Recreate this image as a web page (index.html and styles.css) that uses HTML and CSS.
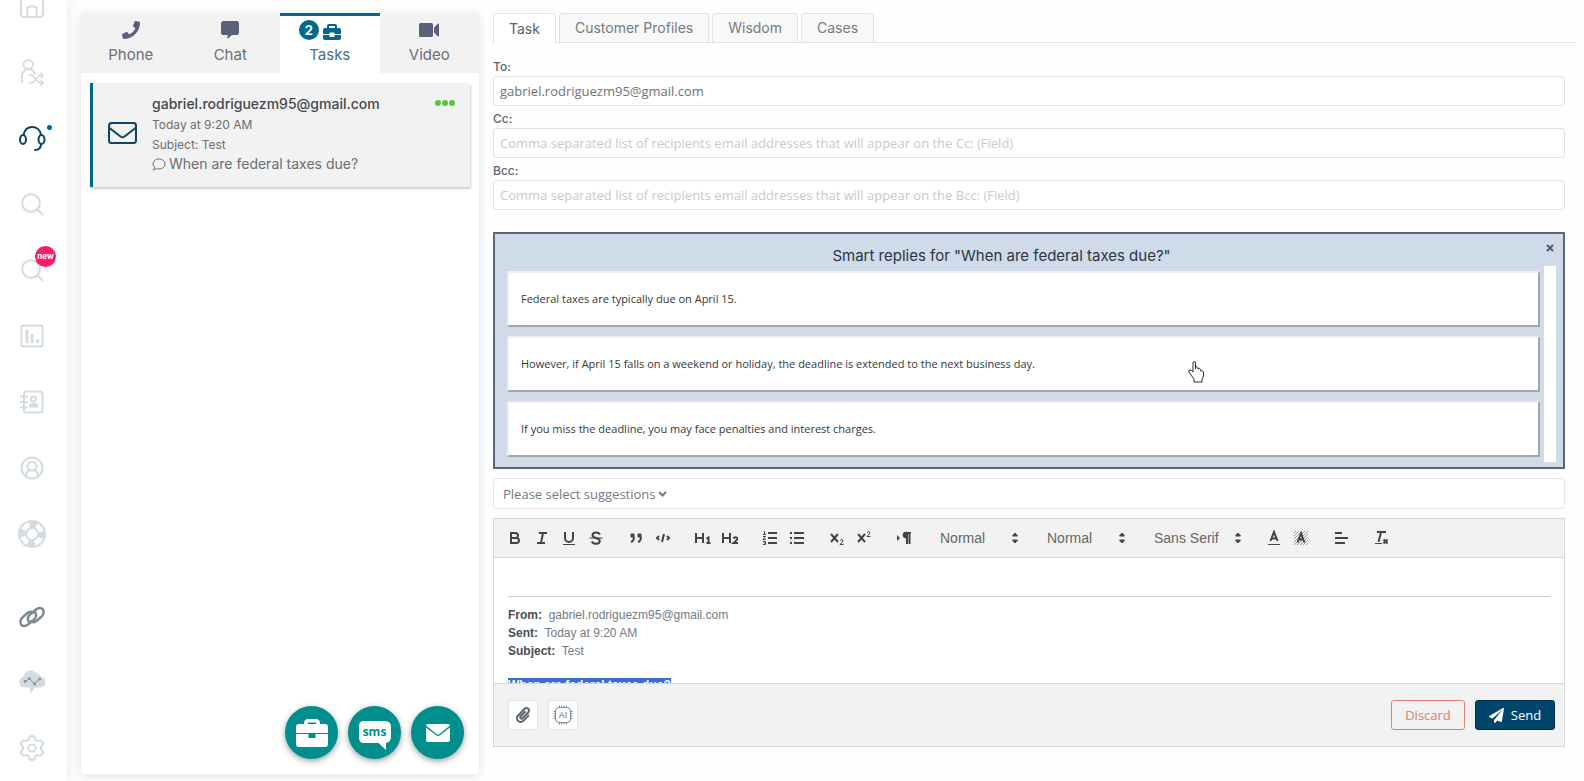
FILE: index.html
```html
<!DOCTYPE html>
<html lang="en">
<head>
<meta charset="utf-8">
<title>Agent workspace</title>
<link rel="stylesheet" href="styles.css">
</head>
<body>
<div class="app">
  <nav class="rail" aria-label="Main">
    <a class="rail-link" href="#home" aria-label="Home"><svg class="ico" viewBox="0 0 24 24"><path d="M1 3V20q0 3 3 3H20q3 0 3-3V3M7.500 22.500V15q0-2.500 2.500-2.500h4q2.500 0 2.500 2.500v7.500"/></svg></a>
    <a class="rail-link" href="#transfer" aria-label="Transfer"><svg class="ico ico-lg" viewBox="0 0 28 30"><circle cx="10" cy="7" r="5"/><path d="M3 26v-5c0-5 3-9 7-9s6.500 2 7 5"/><path class="thin" d="M11 18.500h3.500l7 8H26M11 26.500h3.500l7-8H26M23.500 16l2.500 2.500-2.500 2.500M23.500 24l2.500 2.500-2.500 2.500"/></svg></a>
    <a class="rail-link rail-current" href="#agent" aria-label="Agent" aria-current="page"><svg class="ico ico-lg" viewBox="0 0 28 28"><ellipse cx="5" cy="15.500" rx="3" ry="4.500"/><ellipse cx="23.500" cy="15.500" rx="3" ry="4.500"/><path d="M5.500 11C6.500 6 10 3 14.200 3s8 3 8.900 8M23 20c0 4-2.500 6-6 6"/></svg><span class="rail-dot"></span></a>
    <a class="rail-link" href="#search" aria-label="Search"><svg class="ico" viewBox="0 0 24 24"><circle cx="11" cy="11" r="8.800"/><path d="M17.500 17.500l5 5"/></svg></a>
    <a class="rail-link" href="#search-new" aria-label="New search"><svg class="ico" viewBox="0 0 24 24"><circle cx="11" cy="11" r="8.800"/><path d="M17.500 17.500l5 5"/></svg><span class="rail-new">new</span></a>
    <a class="rail-link" href="#reports" aria-label="Reports"><svg class="ico" viewBox="0 0 24 24"><rect x="1.500" y="1.500" width="21" height="21" rx="2"/><path class="thick" d="M7 7v11M12 11v7M17.500 16.500v1.500"/></svg></a>
    <a class="rail-link" href="#contacts" aria-label="Contacts"><svg class="ico" viewBox="0 0 24 24"><rect x="4" y="1.500" width="18.500" height="21" rx="2.500"/><path d="M1 6.500h6M1 12h6M1 17.500h6"/><circle cx="13.500" cy="9" r="2.500"/><path class="solid" d="M9 17.500v-2q0-2.500 2.500-2.500h4q2.500 0 2.500 2.500v2z"/></svg></a>
    <a class="rail-link" href="#profile" aria-label="Profile"><svg class="ico" viewBox="0 0 24 24"><circle cx="12" cy="12" r="10.500"/><circle cx="12" cy="10" r="4.500"/><path d="M6 20c0-3 2-5.500 4-6M18 20c0-3-2-5.500-4-6"/></svg></a>
    <a class="rail-link" href="#help" aria-label="Help"><svg class="ico ico-lg" viewBox="0 0 28 28"><circle cx="14" cy="14" r="13"/><circle class="ring" cx="14" cy="14" r="9.500"/><circle cx="14" cy="14" r="6"/></svg></a>
    <a class="rail-link rail-lower rail-dark" href="#links" aria-label="Links"><svg class="ico ico-lg" viewBox="0 0 28 24"><path class="chain" d="M11 17c-2-3-1-6 1.500-8L18 4.500c4-3 7-1 7.500 1.500.5 3-.5 4.500-3 6.500l-4 3.500c-2 1.500-4 1.500-5.500 0M17 7c2 3 1 6-1.500 8L10 19.500c-4 3-7 1-7.500-1.500-.5-3 .5-4.500 3-6.500L9.500 8c2-1.500 4-1.500 5.500 0"/></svg></a>
    <a class="rail-link" href="#insights" aria-label="Insights"><svg class="ico ico-lg" viewBox="0 0 28 26"><path class="cloud" d="M6 19.500a5.500 5.500 0 0 1-.5-10.800A7.500 7.500 0 0 1 18.500 5a5 5 0 0 1 4 3.500 5.600 5.600 0 0 1 .5 11h-6L12 26v-6.500z"/><g class="trend"><path d="M7 13.500l4.500-3 5 5.500 4.500-5"/><circle cx="7" cy="13.500" r="1"/><circle cx="11.500" cy="10.500" r="1"/><circle cx="16.500" cy="16" r="1"/><circle cx="21.500" cy="11" r="1"/></g></svg></a>
    <a class="rail-link" href="#settings" aria-label="Settings"><svg class="ico ico-lg" viewBox="0 0 28 28"><path d="M11 4.500Q11.500 2 14 2t3 2.500c.4 2 2 2.900 4 2.200q2.400-.7 3.600 1.300t-.6 3.600c-1.600 1.600-1.600 3.200 0 4.800q1.800 1.600.6 3.600t-3.600 1.300c-2-.7-3.600.2-4 2.200Q16.500 26 14 26t-3-2.500c-.4-2-2-2.900-4-2.200q-2.400.7-3.600-1.300T4 16.400c1.600-1.600 1.600-3.200 0-4.800q-1.800-1.600-.6-3.600T7 6.700c2 .7 3.600-.2 4-2.200z"/><circle cx="14" cy="14" r="3.600"/></svg></a>
  </nav>

  <section class="panel" aria-label="Interactions">
    <div class="channels" role="tablist">
      <button class="channel" type="button" role="tab"><span class="channel-icons"><svg width="18" height="18" viewBox="0 0 512 512"><path d="M493.400 24.600l-104-24c-11.300-2.600-22.900 3.300-27.500 13.900l-48 112c-4.200 9.800-1.400 21.300 6.900 28l60.600 49.600c-36 76.700-98.900 140.500-177.200 177.200l-49.600-60.600c-6.800-8.300-18.200-11.100-28-6.900l-112 48C3.900 366.500-2 378.100.6 389.400l24 104C27.100 504.200 36.700 512 48 512c256.100 0 464-207.500 464-464 0-11.200-7.700-20.900-18.600-23.400z"/></svg></span>Phone</button>
      <button class="channel" type="button" role="tab"><span class="channel-icons"><svg width="20" height="18" viewBox="0 0 20 18"><path d="M3 0h13.500Q19 0 19 2.500v9q0 2.500-2.500 2.500H12l-4.500 4v-4H3Q1 14 1 12V2.500Q1 0 3 0z"/></svg></span>Chat</button>
      <button class="channel channel-on" type="button" role="tab" aria-selected="true"><span class="channel-icons"><span class="count">2</span><svg class="kit" width="18" height="16" viewBox="0 0 18 16"><path d="M4 4V2q0-2 2-2h6q2 0 2 2v2h2q2 0 2 2v4h-6.500V8.500h-5V10H0V6q0-2 2-2zM6 4h6V2H6zM0 11h6.500v2h5v-2H18v3q0 2-2 2H2q-2 0-2-2z"/></svg></span>Tasks</button>
      <button class="channel" type="button" role="tab"><span class="channel-icons"><svg width="20" height="14" viewBox="0 0 20 14"><path d="M1.500 0h11Q14 0 14 1.500v11q0 1.500-1.500 1.500h-11Q0 14 0 12.500v-11Q0 0 1.500 0zM15 4.500L18.500 1Q20 0 20 1.500v11q0 1.500-1.500.5L15 9.500z"/></svg></span>Video</button>
    </div>
    <article class="task">
      <svg class="task-mail" width="30" height="24" viewBox="0 0 30 24"><rect x="1" y="2" width="27" height="20" rx="2.500"/><path d="M1.500 7l11 8.500q2 1.500 4 0L27.500 7"/></svg>
      <div class="task-text">
        <h2 class="task-from">gabriel.rodriguezm95@gmail.com</h2>
        <p class="task-meta">Today at 9:20 AM</p>
        <p class="task-meta">Subject: Test</p>
        <p class="task-last"><svg width="14" height="13" viewBox="0 0 14 13"><path d="M2.500 9A4.500 4.500 0 0 1 1 6c0-3 2.700-5 6-5s6 2 6 5-2.700 5-6 5q-1.500 0-2.700-.6Q3 12 1 12q1.500-1.500 1.500-3z"/></svg>When are federal taxes due?</p>
      </div>
      <button class="more" type="button" aria-label="More"><span></span><span></span><span></span></button>
    </article>
    <div class="fabs">
      <button class="fab" type="button" aria-label="New task"><svg width="32" height="28" viewBox="0 0 32 28"><path d="M8 5V4q0-3 3-4h10q3 1 3 4v1h5q3 0 3 3v6H0V8q0-3 3-3zM12 5h8V3.500h-8zM0 15h12.500v4h7v-4H32v10q0 3-3 3H3q-3 0-3-3z"/></svg></button>
      <button class="fab fab-sms" type="button"><svg width="34" height="30" viewBox="0 0 34 30"><path d="M6 0h21q6 0 6 6v10q0 5-5 6v7l-7.500-7H6q-5 0-5-5V5q0-5 5-5z"/></svg><span>sms</span></button>
      <button class="fab" type="button" aria-label="New email"><svg width="24" height="18" viewBox="0 0 24 18"><path d="M2 0h20q2 0 2 1.500L13.500 10q-1.500 1-3 0L0 1.500Q0 0 2 0zM0 3.500L10 11.200q2 1.400 4 0L24 3.500V16q0 2-2 2H2q-2 0-2-2z"/></svg></button>
    </div>
  </section>

  <main class="work">
    <div class="tabs" role="tablist">
      <button class="tab tab-on" type="button" role="tab" aria-selected="true">Task</button>
      <button class="tab" type="button" role="tab">Customer Profiles</button>
      <button class="tab" type="button" role="tab">Wisdom</button>
      <button class="tab" type="button" role="tab">Cases</button>
    </div>
    <form class="compose">
      <div class="field"><label for="to">To:</label><input id="to" type="text" value="gabriel.rodriguezm95@gmail.com"></div>
      <div class="field"><label for="cc">Cc:</label><input id="cc" type="text" placeholder="Comma separated list of recipients email addresses that will appear on the Cc: (Field)"></div>
      <div class="field"><label for="bcc">Bcc:</label><input id="bcc" type="text" placeholder="Comma separated list of recipients email addresses that will appear on the Bcc: (Field)"></div>

      <section class="smart">
        <h3 class="smart-title">Smart replies for "When are federal taxes due?"</h3>
        <button class="smart-close" type="button" aria-label="Close"><svg width="8" height="8" viewBox="0 0 8 8"><path d="M1 1l6 6M7 1L1 7"/></svg></button>
        <div class="smart-body">
          <div class="smart-list">
            <button class="reply" type="button">Federal taxes are typically due on April 15.</button>
            <button class="reply" type="button">However, if April 15 falls on a weekend or holiday, the deadline is extended to the next business day.<svg class="pointer" width="17" height="22" viewBox="0 0 17 22"><path d="M6 21v-3l-4.500-6q-1.500-2.500 0-3T5 11V2q0-1.500 1.300-1.500T7.500 2v6-2q2-1 2.500.5V8q2-1.500 2.700.5V10q2-1 2.800 1v4L14 18v3z"/></svg></button>
            <button class="reply" type="button">If you miss the deadline, you may face penalties and interest charges.</button>
          </div>
          <div class="smart-track"></div>
        </div>
      </section>

      <button class="suggest" type="button">Please select suggestions<svg width="9" height="6" viewBox="0 0 9 6"><path d="M1 1l3.500 3.500L8 1"/></svg></button>

      <div class="editor">
        <div class="toolbar" role="toolbar" aria-label="Formatting">
          <div class="group">
            <button class="tool" type="button" aria-label="Bold"><svg viewBox="0 0 18 18"><path d="M5 4h4.500a2.500 2.500 0 0 1 0 5H5zM5 9h5.500a2.500 2.500 0 0 1 0 5H5z"/></svg></button>
            <button class="tool" type="button" aria-label="Italic"><svg viewBox="0 0 18 18"><path d="M6 4h8M4 14h8M8 14l2-10"/></svg></button>
            <button class="tool" type="button" aria-label="Underline"><svg viewBox="0 0 18 18"><path d="M5 3v6a4 4 0 0 0 8 0V3"/><path class="hair" d="M3 15.500h12"/></svg></button>
            <button class="tool" type="button" aria-label="Strike"><svg viewBox="0 0 18 18"><path class="hair" d="M2.500 9h13"/><path d="M13 5.500C12 4 10.500 3.500 9 3.500c-2.500 0-3.500 1.200-3.500 2.500C5.500 8 7 8.500 9 9s3.800 1 3.800 3-1.500 2.800-3.800 2.800c-2 0-3.500-.8-4.300-2.300"/></svg></button>
          </div>
          <div class="group">
            <button class="tool" type="button" aria-label="Quote"><svg viewBox="0 0 18 18"><path class="fill" d="M4 5h3v3H4zM11 5h3v3h-3z"/><path d="M7 8c0 4.031-3 5-3 5M14 8c0 4.031-3 5-3 5"/></svg></button>
            <button class="tool" type="button" aria-label="Code"><svg viewBox="0 0 18 18"><path d="M5 7L3 9l2 2M13 7l2 2-2 2M10 5L8 13"/></svg></button>
          </div>
          <div class="group">
            <button class="tool" type="button" aria-label="Heading 1"><svg viewBox="0 0 18 18"><path d="M2 4v10M9 4v10M2 9h7M12.500 9.500l2-1V14M12.500 14h4"/></svg></button>
            <button class="tool" type="button" aria-label="Heading 2"><svg viewBox="0 0 18 18"><path d="M2 4v10M9 4v10M2 9h7M12.500 9.500q.5-1.200 2-1.200 2 0 1.700 1.700-.2 1-3.700 4H17"/></svg></button>
          </div>
          <div class="group">
            <button class="tool" type="button" aria-label="Numbered list"><svg viewBox="0 0 18 18"><path d="M7 4h9M7 9h9M7 14h9"/><path class="hair" d="M2.500 2.500h1v3M2 5.500h3M2 7.500h2.500L2 10.500h3M2 12.500h2.500v3H2M3 14h1.500"/></svg></button>
            <button class="tool" type="button" aria-label="Bullet list"><svg viewBox="0 0 18 18"><path d="M6 4h10M6 9h10M6 14h10M2 4h2M2 9h2M2 14h2"/></svg></button>
          </div>
          <div class="group">
            <button class="tool" type="button" aria-label="Subscript"><svg viewBox="0 0 18 18"><path d="M3 5l7 8M10 5l-7 8"/><path class="hair" d="M12 11.500q2-2 3 0 0 1-3 4h3.500"/></svg></button>
            <button class="tool" type="button" aria-label="Superscript"><svg viewBox="0 0 18 18"><path d="M3 5l7 8M10 5l-7 8"/><path class="hair" d="M12 3.500q2-2 3 0 0 1-3 4h3.500"/></svg></button>
          </div>
          <div class="group">
            <button class="tool" type="button" aria-label="Text direction"><svg viewBox="0 0 18 18"><path class="solid" d="M2 12V6l3 3z"/><path class="fill" d="M11.500 9H11a3 3 0 0 1 0-6h.5z"/><path d="M11 4h5M12 4v11M14.500 4v11"/></svg></button>
          </div>
          <div class="pick"><select aria-label="Size"><option>Normal</option></select><svg viewBox="0 0 18 18"><path d="M6.500 7L9 4l2.500 3zM6.500 11L9 14l2.500-3z"/></svg></div>
          <div class="pick"><select aria-label="Heading"><option>Normal</option></select><svg viewBox="0 0 18 18"><path d="M6.500 7L9 4l2.500 3zM6.500 11L9 14l2.500-3z"/></svg></div>
          <div class="pick pick-wide"><select aria-label="Font"><option>Sans Serif</option></select><svg viewBox="0 0 18 18"><path d="M6.500 7L9 4l2.500 3zM6.500 11L9 14l2.500-3z"/></svg></div>
          <div class="group">
            <button class="tool" type="button" aria-label="Text colour"><svg viewBox="0 0 18 18"><path class="hair" d="M3 15.500h12"/><path d="M5.500 12L9 3l3.500 9M6.500 9.500h5"/></svg></button>
            <button class="tool" type="button" aria-label="Highlight"><svg viewBox="0 0 18 18"><path class="hatch" d="M2 4l2-2M2 7l5-5M2 10l8-8M2 13L13 2M2 16L16 2M5 16L16 5M8 16l8-8M11 16l5-5M14 16l2-2"/><path d="M5.500 13.500L9 4.500l3.500 9M6.500 10.500h5"/></svg></button>
          </div>
          <div class="group">
            <button class="tool" type="button" aria-label="Align"><svg viewBox="0 0 18 18"><path d="M3 9h13M3 14h10M3 4h7"/></svg></button>
          </div>
          <div class="group">
            <button class="tool" type="button" aria-label="Clear formatting"><svg viewBox="0 0 18 18"><path d="M5 3h9M6.500 13L9 3.500M11.500 10.500l4 4M15.500 10.500l-4 4"/><path class="hair" d="M3 14.500h7"/></svg></button>
          </div>
        </div>
        <div class="letter" contenteditable="true" role="textbox" aria-label="Message">
          <hr>
          <p><b>From:</b>&nbsp; gabriel.rodriguezm95@gmail.com</p>
          <p><b>Sent:</b>&nbsp; Today at 9:20 AM</p>
          <p><b>Subject:</b>&nbsp; Test</p>
          <p class="quoted"><b class="marked">When are federal taxes due?</b></p>
        </div>
        <div class="actions">
          <button class="square" type="button" aria-label="Attach"><svg width="14" height="16" viewBox="0 0 448 512"><path class="clip" d="M43.246 466.142c-58.430-60.289-57.341-157.511 1.386-217.581L254.392 34c44.316-45.332 116.351-45.336 160.671 0 43.890 44.894 43.943 117.329 0 162.276L232.214 383.128c-29.855 30.537-78.633 30.111-107.982-.998-28.275-29.970-27.368-77.473 1.452-106.953l143.743-146.835c6.182-6.314 16.312-6.422 22.626-.241l22.861 22.379c6.315 6.182 6.422 16.312.241 22.626L171.427 319.927c-4.932 5.045-5.236 13.428-.648 18.292 4.372 4.634 11.245 4.711 15.688.165l182.849-186.851c19.613-20.062 19.613-52.725-.011-72.798-19.189-19.627-49.957-19.637-69.154 0L90.390 293.295c-34.763 35.560-35.299 93.120-1.191 128.313 34.010 35.093 88.985 35.137 123.058.286l172.060-175.999c6.177-6.319 16.307-6.433 22.626-.256l22.877 22.364c6.319 6.177 6.434 16.307.256 22.626l-172.060 175.998c-59.576 60.938-155.943 60.216-214.770-.485z"/></svg></button>
          <button class="square" type="button" aria-label="AI assist"><svg width="20" height="20" viewBox="0 0 20 20"><path class="chip" d="M6 2.500h8q3.500 0 3.500 3.500v8q0 3.500-3.500 3.500H6Q2.500 17.500 2.500 14V6Q2.500 2.500 6 2.500zM6.500.5v2M8.800.5v2M11.200.5v2M13.500.5v2M6.500 17.500v2M8.800 17.500v2M11.200 17.500v2M13.500 17.500v2M.5 6.500h2M.5 8.800h2M.5 11.200h2M.5 13.500h2M17.500 6.500h2M17.500 8.800h2M17.500 11.200h2M17.500 13.500h2"/><text class="chip-text" x="10" y="13" text-anchor="middle">AI</text></svg></button>
          <button class="discard" type="button">Discard</button>
          <button class="send" type="submit"><svg width="15" height="15" viewBox="0 0 512 512"><path d="M476 3.200L12.500 270.600c-18.100 10.400-15.800 35.600 2.200 43.200L121 358.400l287.300-253.200c5.500-4.900 13.300 2.600 8.600 8.300L176 407v80.500c0 23.600 28.500 32.900 42.500 15.800L282 426l124.600 52.200c14.200 6 30.400-2.900 33-18.200l72-432C515 7.800 493.300-6.800 476 3.200z"/></svg>Send</button>
        </div>
      </div>
    </form>
  </main>
</div>
</body>
</html>
```
FILE: styles.css
```css
* { box-sizing: border-box; }
body { margin: 0; background: #fefefe; color: #5f6770; font: 14px/20px Inter, "Open Sans", sans-serif; }
button, input, select { font: inherit; color: inherit; }
button { margin: 0; padding: 0; border: 0; background: none; cursor: pointer; }
h2, h3, p { margin: 0; font-weight: 400; }

.app { display: flex; height: 100vh; min-height: 720px; overflow: hidden; }

/* Icon rail */
.rail { flex: none; width: 67px; padding-right: 3px; background: #fff; box-shadow: 2px 0 12px #e9ecf1; display: flex; flex-direction: column; overflow: hidden; justify-content: flex-end; }
.rail-link { position: relative; flex: none; height: 66px; display: flex; align-items: center; justify-content: center; color: #d3dcdf; }
.rail-lower { margin: 17px 0 -2px; }
.rail-link:last-child { margin-top: 1px; }
.rail-current { color: #0d4460; }
.rail-dark { color: #7b8a93; }
.ico { width: 24px; height: 24px; fill: none; stroke: currentColor; stroke-width: 2; stroke-linecap: round; stroke-linejoin: round; }
.ico-lg { width: 28px; height: 28px; }
.ico .thin { stroke-width: 1.5; }
.ico .thick { stroke-width: 3; }
.ico .chain { stroke-width: 2.4; }
.ico .solid { fill: currentColor; stroke: none; }
.ico .ring { stroke-width: 6; stroke-dasharray: 7 8; stroke-dashoffset: 3; stroke-linecap: butt; }
.ico .cloud { fill: #d3dcdf; stroke: none; }
.ico .trend { stroke: #7b8a93; stroke-width: 1; }
.rail-dot { position: absolute; left: 47px; top: 20px; width: 5px; height: 5px; border-radius: 50%; background: #00678f; }
.rail-new { position: absolute; left: 35px; top: 9px; width: 21px; height: 21px; border-radius: 50%; background: #ff1a6c; color: #fff; font-size: 8px; font-weight: 700; line-height: 21px; text-align: center; }

/* Interaction list */
.panel { flex: none; position: relative; width: 398px; margin: 13px 0 7px 14px; background: #fff; border-radius: 3px; box-shadow: 0 2px 10px #dde1e8; }
.channels { display: grid; grid-template-columns: repeat(4, 1fr); }
.channel { height: 60px; padding-top: 4px; border-top: 3px solid #f2f2f2; background: #f2f2f2; color: #6b7078; font-size: 15px; line-height: 20px; display: flex; flex-direction: column; align-items: center; justify-content: flex-start; gap: 5px; }
.channel svg { fill: #5a6078; }
.channel-icons { height: 20px; display: flex; align-items: center; justify-content: center; gap: 4px; }
.channel-on { background: #fff; border-top-color: #00678f; color: #47708c; }
.channel-on svg { fill: #00678f; }
.channel-on .channel-icons { padding-right: 20px; }
.count { width: 20px; height: 20px; border-radius: 50%; background: #00678f; color: #fff; font-size: 13px; font-weight: 700; line-height: 20px; }
.kit { align-self: flex-end; }
.task { position: relative; margin: 10px 9px; padding: 10px 15px 14px; min-height: 104px; border-left: 3px solid #00678f; background: #f2f2f2; box-shadow: 1px 2px 2px #cdcfd2; display: flex; align-items: center; gap: 14px; }
.task-mail { fill: none; stroke: #0d4460; stroke-width: 2; }
.task-text { flex: 1; }
.task-from { color: #45484d; font-size: 14px; font-weight: 500; line-height: 22px; }
.task-meta { color: #6b6e73; font-size: 12px; line-height: 20px; }
.task-last { display: flex; align-items: center; gap: 3px; color: #6b6e73; font-size: 14px; line-height: 18px; }
.task-last svg { fill: none; stroke: #6b6e73; }
.more { position: absolute; right: 15px; top: 17px; display: flex; gap: 1px; }
.more span { width: 6px; height: 6px; border-radius: 50%; background: #5ac73a; }
.fabs { position: absolute; right: 15px; bottom: 15px; display: flex; gap: 10px; }
.fab { position: relative; width: 53px; height: 53px; border-radius: 50%; background: #008f8c; box-shadow: 0 2px 6px #9a9fa3; display: flex; align-items: center; justify-content: center; }
.fab svg { fill: #fff; }
.fab-sms svg { margin-top: 6px; }
.fab-sms span { position: absolute; left: 0; right: 0; top: 17px; color: #008f8c; font: 700 12px/18px "Open Sans", sans-serif; }

/* Work area */
.work { flex: 1; min-width: 0; padding: 13px 9px 34px 14px; display: flex; flex-direction: column; }
.tabs { display: flex; gap: 3px; border-bottom: 1px solid #e3e3e5; }
.tab { height: 29px; padding: 0 15px; border: 1px solid #e3e3e5; border-bottom: 0; border-radius: 4px 4px 0 0; background: #f8f8f8; color: #757b85; font-size: 14px; }
.tab-on { height: 30px; margin-bottom: -1px; background: #fff; color: #53636e; }
.compose { flex: 1; min-height: 0; margin-right: 10px; padding-top: 14px; display: flex; flex-direction: column; }
.field { display: flex; flex-direction: column; margin-bottom: 3px; }
.field label { color: #5f6670; font-size: 12px; font-weight: 500; line-height: 19px; }
.field input { height: 30px; padding: 0 6px; border: 1px solid #e0e0e3; border-radius: 3px; background: #fff; color: #6d7379; font-family: "Open Sans", sans-serif; font-size: 13px; outline: 0; }
.field input::placeholder { color: #c9c9ce; opacity: 1; }

.smart { position: relative; margin-top: 19px; padding: 11px 7px 5px 12px; border: 2px solid #5a677e; background: #cfdbe9; }
.smart-title { padding-right: 60px; color: #2b3544; font-size: 15px; line-height: 21px; text-align: center; }
.smart-close { position: absolute; right: 8px; top: 9px; width: 10px; height: 10px; display: flex; align-items: center; justify-content: center; }
.smart-close svg { fill: none; stroke: #4f5d70; stroke-width: 2; }
.smart-body { display: flex; gap: 4px; }
.smart-list { flex: 1; padding: 5px 0 5px; display: flex; flex-direction: column; gap: 9px; }
.smart-track { width: 12px; background: #fff; }
.reply { position: relative; height: 56px; padding: 0 12px; border: 2px solid; border-color: #eceef1 #a3a5a8 #a3a5a8 #eceef1; background: #fff; color: #34373b; font: 11px/18px "Open Sans", sans-serif; text-align: left; }
.pointer { position: absolute; left: 66%; top: 23px; fill: #fff; stroke: #2b2b2b; }

.suggest { flex: none; height: 31px; margin-top: 9px; padding: 0 9px; border: 1px solid #e6e6e8; border-radius: 3px; background: #fff; color: #747b83; font-family: "Open Sans", sans-serif; font-size: 13px; display: flex; align-items: center; gap: 2px; }
.suggest svg { fill: none; stroke: #747b83; stroke-width: 2; }

.editor { flex: 1; min-height: 0; margin-top: 9px; border: 1px solid #d6d6d8; display: flex; flex-direction: column; font-family: "Liberation Sans", Arial, sans-serif; }
.toolbar { flex: none; height: 38px; padding: 0 7px; background: #f2f2f2; display: flex; align-items: center; gap: 13px; }
.group { display: flex; }
.tool { width: 27px; height: 24px; display: flex; align-items: center; justify-content: center; }
.tool svg { width: 18px; height: 18px; fill: none; stroke: #444; stroke-width: 2; }
.tool .hair { stroke-width: 1; }
.tool .hatch { stroke-width: 1; stroke: #999; }
.tool .fill { fill: #444; stroke-width: 1; }
.tool .solid { fill: #444; stroke: none; }
.pick { position: relative; width: 94px; height: 24px; }
.pick-wide { width: 103px; }
.pick select { width: 100%; height: 24px; padding: 0 10px; border: 0; appearance: none; background: transparent; color: #666; font-size: 14px; }
.pick svg { position: absolute; right: 0; top: 3px; width: 18px; height: 18px; fill: #444; stroke: #444; stroke-width: 1; pointer-events: none; }
.letter { flex: 1; min-height: 0; padding: 38px 14px 0; border-top: 1px solid #d6d6d8; border-bottom: 1px solid #d6d6d8; background: #fff; color: #747b83; font-size: 12px; line-height: 18px; overflow: hidden; outline: 0; }
.letter hr { height: 1px; margin: 0 0 9px; border: 0; background: #cccdcf; }
.letter b { color: #4a4e54; }
.letter .quoted { margin-top: 16px; }
.letter .marked { background: #3a6dd0; color: #fff; }
.actions { flex: none; padding: 16px 9px 16px 14px; background: #f2f2f2; display: flex; align-items: center; gap: 10px; }
.square { width: 30px; height: 30px; border: 1px solid #e4e4e6; border-radius: 4px; background: #fff; display: flex; align-items: center; justify-content: center; }
.square svg { flex: none; }
.clip { fill: #5e6670; }
.chip { fill: none; stroke: #84888c; }
.chip-text { fill: #6f7377; font: 9px "Liberation Sans", Arial, sans-serif; }
.discard, .send { height: 30px; border: 1px solid #e0806c; border-radius: 3px; color: #e0806c; font-family: "Open Sans", sans-serif; font-size: 13px; }
.discard { width: 74px; margin-left: auto; }
.send { width: 80px; border-color: #002f4d; background: #00466a; color: #fff; display: flex; align-items: center; justify-content: center; gap: 7px; }
.send svg { fill: #fff; }
```
